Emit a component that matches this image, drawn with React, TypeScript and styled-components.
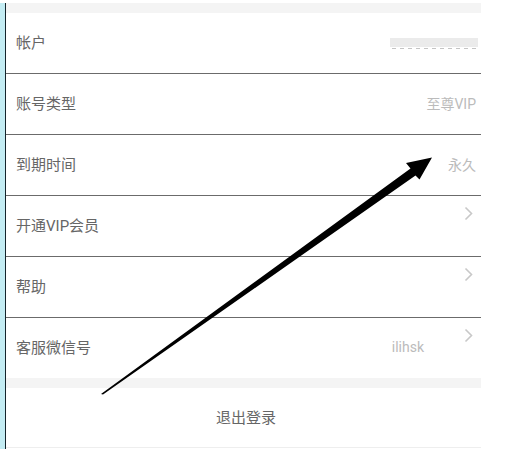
import styled, { createGlobalStyle } from "styled-components";

const GlobalStyle = createGlobalStyle`
  html, body {
    margin: 0;
    padding: 0;
    background: #ffffff;
  }
  body {
    font-family: Roboto, "Noto Sans CJK SC", "Noto Sans", sans-serif;
  }
`;

const Page = styled.div`
  position: relative;
  width: 520px;
  height: 449px;
  padding-top: 3px;
  box-sizing: border-box;
  display: flex;
  overflow: hidden;
  background: #fff;
`;

const Strip = styled.div`
  width: 5px;
  background: #c3ecf3;
  border-right: 1px solid #14242b;
`;

const Panel = styled.div`
  width: 475px;
  display: flex;
  flex-direction: column;
`;

const Band = styled.div`
  height: 10px;
  background: #f4f4f4;
`;

const Row = styled.div<{ $line?: boolean }>`
  height: 60px;
  box-sizing: border-box;
  display: flex;
  align-items: center;
  padding: 0 5px 3px 10px;
  border-bottom: ${(p) => (p.$line ? "1px solid #6b6b6b" : "none")};
  background: #fff;
  height: ${(p) => (p.$line ? "61px" : "60px")};
`;

const Label = styled.span`
  flex: 1;
  font-size: 15px;
  color: #666;
`;

const Value = styled.span`
  font-size: 14px;
  color: #bbb;
`;

const Redacted = styled.span`
  position: relative;
  display: inline-block;
  width: 88px;
  height: 12px;
  margin-right: -2px;
  margin-top: 4px;
  background: linear-gradient(#ebebeb 0 9px, transparent 9px);
  &::after {
    content: "";
    position: absolute;
    left: 2px;
    right: 2px;
    bottom: 1px;
    height: 1px;
    background: repeating-linear-gradient(
      90deg,
      #c4c4c4 0 4px,
      transparent 4px 8px
    );
  }
`;

const Chevron = styled.svg<{ $gap: number }>`
  align-self: flex-start;
  margin-top: 10px;
  margin-left: ${(p) => p.$gap}px;
  margin-right: 3px;
  width: 9px;
  height: 15px;
`;

const Logout = styled.div`
  height: 60px;
  display: flex;
  align-items: center;
  justify-content: center;
  font-size: 15px;
  color: #666;
  padding: 0 0 3px 5px;
  box-sizing: border-box;
  border-bottom: 1px solid #eeeeee;
`;

const Arrow = styled.svg`
  position: absolute;
  left: 0;
  top: 0;
  pointer-events: none;
`;

const ChevronIcon = ({ gap = 0 }: { gap?: number }) => (
  <Chevron viewBox="0 0 9 15" $gap={gap}>
    <path d="M1.5 1.5 L7.5 7.5 L1.5 13.5" fill="none" stroke="#c8c8c8" strokeWidth="1.6" />
  </Chevron>
);

export default function App() {
  return (
    <>
      <GlobalStyle />
      <Page>
        <Strip />
        <Panel>
          <Band />
          <Row $line>
            <Label>帐户</Label>
            <Redacted />
          </Row>
          <Row $line>
            <Label>账号类型</Label>
            <Value>至尊VIP</Value>
          </Row>
          <Row $line>
            <Label>到期时间</Label>
            <Value>永久</Value>
          </Row>
          <Row $line>
            <Label>开通VIP会员</Label>
            <ChevronIcon />
          </Row>
          <Row $line>
            <Label>帮助</Label>
            <ChevronIcon />
          </Row>
          <Row>
            <Label>客服微信号</Label>
            <Value>ilihsk</Value>
            <ChevronIcon gap={40} />
          </Row>
          <Band />
          <Logout>退出登录</Logout>
        </Panel>
        <Arrow width="520" height="449" viewBox="0 0 520 449">
          <polygon
            points="101,394 410.5,168.5 406,163 432,157.5 419.5,179.5 415.5,175.5 103,394.5"
            fill="#000"
          />
        </Arrow>
      </Page>
    </>
  );
}
